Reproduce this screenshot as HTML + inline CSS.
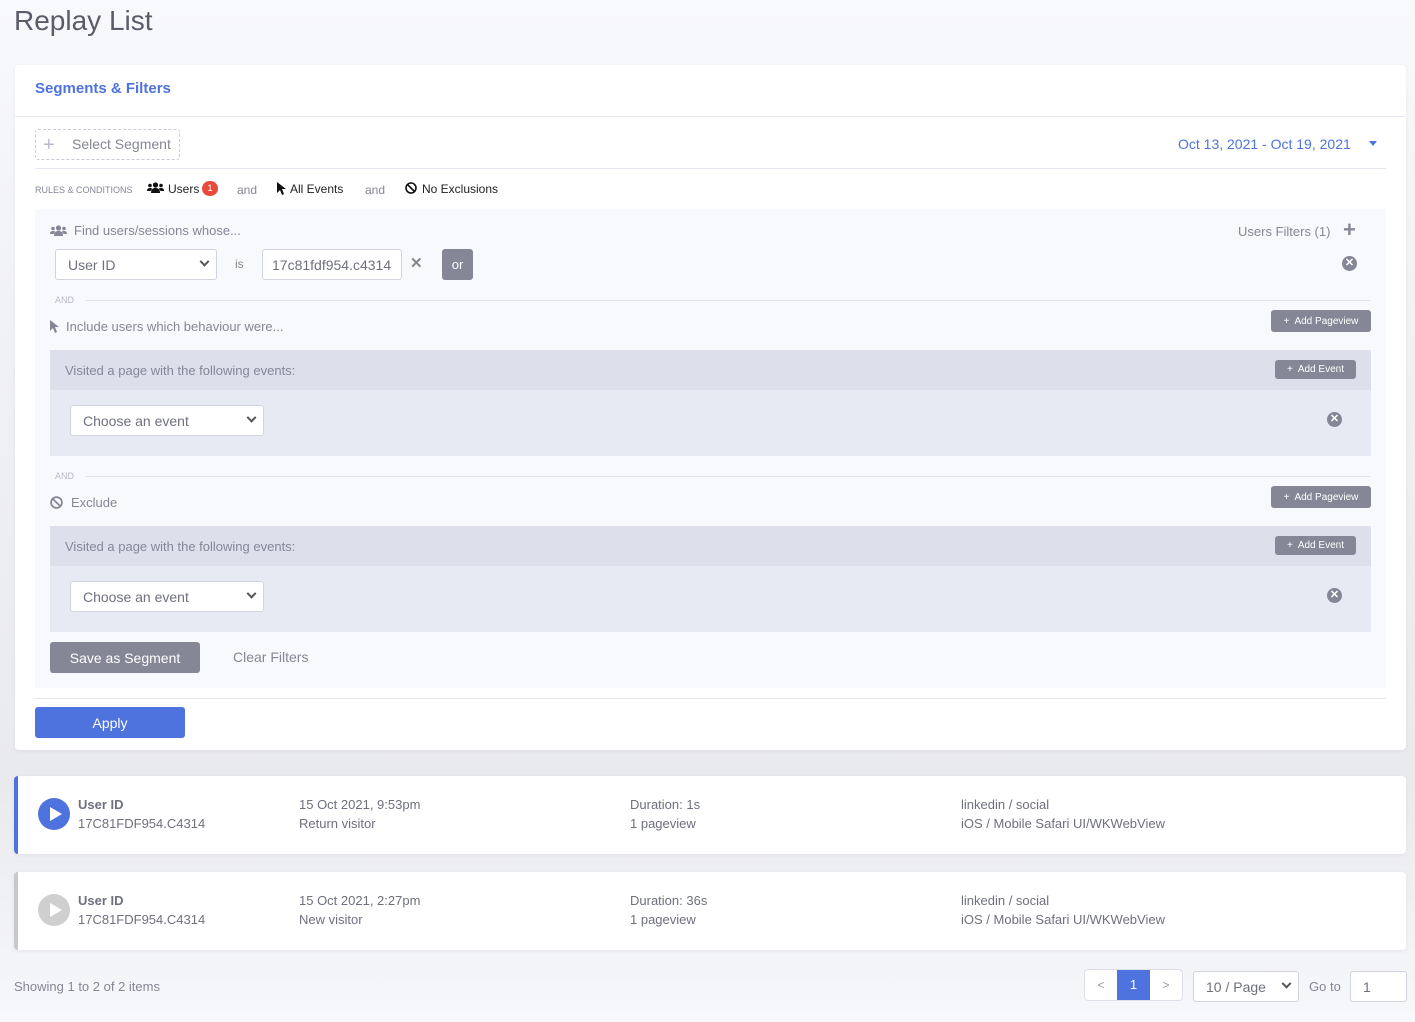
<!DOCTYPE html>
<html><head><meta charset="utf-8"><style>
*{box-sizing:border-box;margin:0;padding:0}
body{width:1415px;height:1022px;overflow:hidden;font-family:"Liberation Sans",sans-serif;color:#6e707e;position:relative;background:linear-gradient(#f8f9fc 0px,#f1f2f6 300px,#e9eaee 780px,#f3f4f8 960px,#f7f8fb 1022px)}
.a{position:absolute}
.card{background:#fff;border-radius:4px;box-shadow:0 1px 4px rgba(0,0,0,.06)}
.btn{background:#858796;color:#fff;border-radius:3px;font-size:10px;display:flex;align-items:center;justify-content:center}
.sel{background:#fff;border:1px solid #d1d3e2;border-radius:3px;font-size:14px;color:#6e707e;padding-left:12px;display:flex;align-items:center}
.chev{position:absolute;right:8px;top:50%;margin-top:-4px;width:7px;height:7px;border-right:2px solid #555;border-bottom:2px solid #555;transform:rotate(45deg) translate(-2px,-2px)}
.xc{width:15px;height:15px;border-radius:50%;background:#858796;color:#fff;font-size:11px;font-weight:bold;display:flex;align-items:center;justify-content:center;line-height:1}
.t13{font-size:13px}
</style></head><body>
<div class="a" style="left:14px;top:5px;font-size:28px;color:#5a5c69">Replay List</div>

<div class="a card" style="left:15px;top:65px;width:1391px;height:685px"></div>
<div class="a" style="left:15px;top:116px;width:1391px;height:1px;background:#e3e6f0"></div>
<div class="a" style="left:35px;top:80px;font-size:15px;font-weight:bold;color:#4e73df">Segments &amp; Filters</div>

<div class="a" style="left:35px;top:129px;width:145px;height:31px;border:1px dashed #c8cad6;border-radius:3px"></div>
<div class="a" style="left:43px;top:134px;font-size:20px;color:#b7b9cc">+</div>
<div class="a" style="left:72px;top:136px;font-size:14px;color:#858796">Select Segment</div>
<div class="a" style="left:1178px;top:136px;font-size:14px;color:#4e73df">Oct 13, 2021 - Oct 19, 2021</div>
<div class="a" style="left:1369px;top:141px;width:0;height:0;border-left:4px solid transparent;border-right:4px solid transparent;border-top:5px solid #4e73df"></div>
<div class="a" style="left:35px;top:168px;width:1351px;height:1px;background:#e3e6f0"></div>

<div class="a" style="left:35px;top:185px;font-size:9px;color:#858796">RULES &amp; CONDITIONS</div>
<svg class="a" style="left:147px;top:182px" width="17" height="12" viewBox="0 0 17 12"><circle cx="8.5" cy="3" r="2.6" fill="#111"/><circle cx="3" cy="3.5" r="1.8" fill="#111"/><circle cx="14" cy="3.5" r="1.8" fill="#111"/><path d="M4 11C4 7 6 6 8.5 6S13 7 13 11Z" fill="#111"/><path d="M0 9C0 7 1 6 3 6S5 6.5 5 7L3.5 9Z" fill="#111"/><path d="M17 9C17 7 16 6 14 6S12 6.5 12 7L13.5 9Z" fill="#111"/></svg>
<div class="a" style="left:168px;top:182px;font-size:12px;color:#222">Users</div>
<div class="a" style="left:202px;top:181px;width:16px;height:15px;border-radius:8px;background:#e74a3b;color:#fff;font-size:9px;text-align:center;line-height:15px">1</div>
<div class="a" style="left:237px;top:183px;font-size:12px;color:#858796">and</div>
<svg class="a" style="left:277px;top:182px" width="9" height="13" viewBox="0 0 9 13"><path d="M0 0L0 11L3 8L5 13L7 12L5 7L9 7Z" fill="#111"/></svg>
<div class="a" style="left:290px;top:182px;font-size:12px;color:#222">All Events</div>
<div class="a" style="left:365px;top:183px;font-size:12px;color:#858796">and</div>
<svg class="a" style="left:405px;top:182px" width="12" height="12" viewBox="0 0 12 12"><circle cx="6" cy="6" r="5" fill="none" stroke="#111" stroke-width="1.6"/><path d="M2.5 2.5L9.5 9.5" stroke="#111" stroke-width="1.6"/></svg>
<div class="a" style="left:422px;top:182px;font-size:12px;color:#222">No Exclusions</div>

<div class="a" style="left:35px;top:209px;width:1351px;height:479px;background:#f8f9fc"></div>
<svg class="a" style="left:50px;top:225px" width="17" height="12" viewBox="0 0 17 12"><circle cx="8.5" cy="3" r="2.6" fill="#858796"/><circle cx="3" cy="3.5" r="1.8" fill="#858796"/><circle cx="14" cy="3.5" r="1.8" fill="#858796"/><path d="M4 11C4 7 6 6 8.5 6S13 7 13 11Z" fill="#858796"/><path d="M0 9C0 7 1 6 3 6S5 6.5 5 7L3.5 9Z" fill="#858796"/><path d="M17 9C17 7 16 6 14 6S12 6.5 12 7L13.5 9Z" fill="#858796"/></svg>
<div class="a" style="left:74px;top:223px;font-size:13px;color:#858796">Find users/sessions whose...</div>
<div class="a" style="left:1238px;top:224px;font-size:13px;color:#858796">Users Filters (1)</div>
<div class="a" style="left:1343px;top:217px;font-size:22px;color:#858796;font-weight:bold">+</div>
<div class="a xc" style="left:1342px;top:256px">✕</div>
<div class="a sel" style="left:55px;top:249px;width:162px;height:31px">User ID<span class="chev"></span></div>
<div class="a" style="left:235px;top:257px;font-size:12px;color:#858796">is</div>
<div class="a sel" style="left:262px;top:249px;width:140px;height:31px;padding-left:9px;overflow:hidden;white-space:nowrap">17c81fdf954.c4314</div>
<div class="a" style="left:410px;top:254px;font-size:15px;font-weight:bold;color:#858796">✕</div>
<div class="a btn" style="left:442px;top:249px;width:31px;height:31px;font-size:13px">or</div>

<div class="a" style="left:55px;top:295px;font-size:9px;color:#b7b9cc">AND</div>
<div class="a" style="left:85px;top:300px;width:1286px;height:1px;background:#dddfeb"></div>
<svg class="a" style="left:50px;top:320px" width="9" height="13" viewBox="0 0 9 13"><path d="M0 0L0 11L3 8L5 13L7 12L5 7L9 7Z" fill="#858796"/></svg>
<div class="a" style="left:66px;top:319px;font-size:13px;color:#858796">Include users which behaviour were...</div>
<div class="a btn" style="left:1271px;top:310px;width:100px;height:22px">+&nbsp; Add Pageview</div>
<div class="a" style="left:50px;top:350px;width:1321px;height:40px;background:#dddfeb"></div>
<div class="a" style="left:50px;top:390px;width:1321px;height:66px;background:#e8eaf3"></div>
<div class="a" style="left:65px;top:363px;font-size:13px;color:#858796">Visited a page with the following events:</div>
<div class="a btn" style="left:1275px;top:360px;width:81px;height:19px">+&nbsp; Add Event</div>
<div class="a sel" style="left:70px;top:405px;width:194px;height:31px">Choose an event<span class="chev"></span></div>
<div class="a xc" style="left:1327px;top:412px">✕</div>

<div class="a" style="left:55px;top:471px;font-size:9px;color:#b7b9cc">AND</div>
<div class="a" style="left:85px;top:476px;width:1286px;height:1px;background:#dddfeb"></div>
<svg class="a" style="left:50px;top:496px" width="13" height="13" viewBox="0 0 12 12"><circle cx="6" cy="6" r="5" fill="none" stroke="#858796" stroke-width="1.6"/><path d="M2.5 2.5L9.5 9.5" stroke="#858796" stroke-width="1.6"/></svg>
<div class="a" style="left:71px;top:495px;font-size:13px;color:#858796">Exclude</div>
<div class="a btn" style="left:1271px;top:486px;width:100px;height:22px">+&nbsp; Add Pageview</div>
<div class="a" style="left:50px;top:526px;width:1321px;height:40px;background:#dddfeb"></div>
<div class="a" style="left:50px;top:566px;width:1321px;height:66px;background:#e8eaf3"></div>
<div class="a" style="left:65px;top:539px;font-size:13px;color:#858796">Visited a page with the following events:</div>
<div class="a btn" style="left:1275px;top:536px;width:81px;height:19px">+&nbsp; Add Event</div>
<div class="a sel" style="left:70px;top:581px;width:194px;height:31px">Choose an event<span class="chev"></span></div>
<div class="a xc" style="left:1327px;top:588px">✕</div>

<div class="a btn" style="left:50px;top:642px;width:150px;height:31px;font-size:14px">Save as Segment</div>
<div class="a" style="left:233px;top:649px;font-size:14px;color:#858796">Clear Filters</div>
<div class="a" style="left:35px;top:698px;width:1351px;height:1px;background:#e3e6f0"></div>
<div class="a" style="left:35px;top:707px;width:150px;height:31px;background:#4e73df;border-radius:3px;color:#fff;font-size:14px;display:flex;align-items:center;justify-content:center">Apply</div>

<div class="a card" style="left:14px;top:776px;width:1392px;height:78px;border-left:4px solid #4e73df"></div>
<svg class="a" style="left:38px;top:798px" width="32" height="32" viewBox="0 0 32 32"><circle cx="16" cy="16" r="16" fill="#4e73df"/><path d="M12 9L24 16L12 23Z" fill="#fff"/></svg>
<div class="a t13" style="left:78px;top:797px;font-weight:bold;color:#6e707e">User ID</div>
<div class="a t13" style="left:78px;top:816px">17C81FDF954.C4314</div>
<div class="a t13" style="left:299px;top:797px">15 Oct 2021, 9:53pm</div>
<div class="a t13" style="left:299px;top:816px">Return visitor</div>
<div class="a t13" style="left:630px;top:797px">Duration: 1s</div>
<div class="a t13" style="left:630px;top:816px">1 pageview</div>
<div class="a t13" style="left:961px;top:797px">linkedin / social</div>
<div class="a t13" style="left:961px;top:816px">iOS / Mobile Safari UI/WKWebView</div>

<div class="a card" style="left:14px;top:872px;width:1392px;height:78px;border-left:4px solid #c8c8c8"></div>
<svg class="a" style="left:38px;top:894px" width="32" height="32" viewBox="0 0 32 32"><circle cx="16" cy="16" r="16" fill="#cfcfcf"/><path d="M12 9L24 16L12 23Z" fill="#fff"/></svg>
<div class="a t13" style="left:78px;top:893px;font-weight:bold;color:#6e707e">User ID</div>
<div class="a t13" style="left:78px;top:912px">17C81FDF954.C4314</div>
<div class="a t13" style="left:299px;top:893px">15 Oct 2021, 2:27pm</div>
<div class="a t13" style="left:299px;top:912px">New visitor</div>
<div class="a t13" style="left:630px;top:893px">Duration: 36s</div>
<div class="a t13" style="left:630px;top:912px">1 pageview</div>
<div class="a t13" style="left:961px;top:893px">linkedin / social</div>
<div class="a t13" style="left:961px;top:912px">iOS / Mobile Safari UI/WKWebView</div>

<div class="a t13" style="left:14px;top:979px;color:#858796">Showing 1 to 2 of 2 items</div>
<div class="a" style="left:1084px;top:969px;width:99px;height:32px;background:#fff;border:1px solid #dddfeb;border-radius:4px;overflow:hidden">
<div class="a" style="left:0;top:0;width:32px;height:30px;text-align:center;line-height:30px;font-size:12px;color:#999">&lt;</div>
<div class="a" style="left:32px;top:0;width:33px;height:30px;background:#4e73df;color:#fff;text-align:center;line-height:30px;font-size:13px">1</div>
<div class="a" style="left:65px;top:0;width:32px;height:30px;text-align:center;line-height:30px;font-size:12px;color:#999">&gt;</div>
</div>
<div class="a sel" style="left:1193px;top:971px;width:106px;height:31px;font-size:14px">10 / Page<span class="chev"></span></div>
<div class="a t13" style="left:1309px;top:979px;color:#858796">Go to</div>
<div class="a sel" style="left:1350px;top:971px;width:57px;height:31px;font-size:14px">1</div>
</body></html>
